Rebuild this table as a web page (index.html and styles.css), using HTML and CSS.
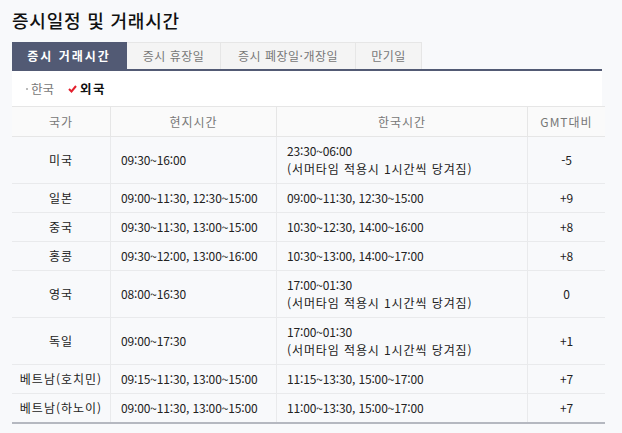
FILE: index.html
```html
<!DOCTYPE html>
<html lang="ko">
<head>
<meta charset="utf-8">
<link rel="stylesheet" href="styles.css">
</head>
<body>
<div class="page">
  <h1 class="title">증시일정 및 거래시간</h1>
  <ul class="tabs">
    <li class="tab tab-on t1">증시 거래시간</li>
    <li class="tab t2">증시 휴장일</li>
    <li class="tab t3">증시 폐장일·개장일</li>
    <li class="tab t4">만기일</li>
  </ul>
  <div class="panel">
    <div class="filter">
      <span class="opt"><span class="dot"></span>한국</span>
      <span class="opt opt-on"><svg class="check" width="9" height="8" viewBox="0 0 9 8"><path d="M1 4 L3.5 6.5 L8 1" fill="none" stroke="#e3202d" stroke-width="2"/></svg>외국</span>
    </div>
    <table class="grid">
      <thead>
        <tr><th class="c1">국가</th><th class="c2">현지시간</th><th class="c3">한국시간</th><th class="c4">GMT대비</th></tr>
      </thead>
      <tbody>
        <tr><td class="ctr nation">미국</td><td>09:30~16:00</td><td>23:30~06:00<br><span class="note">(서머타임 적용시 1시간씩 당겨짐)</span></td><td class="ctr">-5</td></tr>
        <tr><td class="ctr nation">일본</td><td>09:00~11:30, 12:30~15:00</td><td>09:00~11:30, 12:30~15:00</td><td class="ctr">+9</td></tr>
        <tr><td class="ctr nation">중국</td><td>09:30~11:30, 13:00~15:00</td><td>10:30~12:30, 14:00~16:00</td><td class="ctr">+8</td></tr>
        <tr><td class="ctr nation">홍콩</td><td>09:30~12:00, 13:00~16:00</td><td>10:30~13:00, 14:00~17:00</td><td class="ctr">+8</td></tr>
        <tr><td class="ctr nation">영국</td><td>08:00~16:30</td><td>17:00~01:30<br><span class="note">(서머타임 적용시 1시간씩 당겨짐)</span></td><td class="ctr">0</td></tr>
        <tr><td class="ctr nation">독일</td><td>09:00~17:30</td><td>17:00~01:30<br><span class="note">(서머타임 적용시 1시간씩 당겨짐)</span></td><td class="ctr">+1</td></tr>
        <tr><td class="ctr nation">베트남(호치민)</td><td>09:15~11:30, 13:00~15:00</td><td>11:15~13:30, 15:00~17:00</td><td class="ctr">+7</td></tr>
        <tr><td class="ctr nation">베트남(하노이)</td><td>09:00~11:30, 13:00~15:00</td><td>11:00~13:30, 15:00~17:00</td><td class="ctr">+7</td></tr>
      </tbody>
    </table>
  </div>
</div>
</body>
</html>
```

FILE: styles.css
```css
html, body {
  margin: 0;
  padding: 0;
  background: #f8f9fb;
}
body {
  font-family: "Noto Sans CJK KR", "Noto Sans", sans-serif;
  font-size: 12px;
  color: #222;
}
.page {
  width: 590px;
  padding: 8px 0 0 12px;
}
.title {
  margin: 0 0 10px 0;
  font-size: 18px;
  font-weight: 500;
  line-height: 24px;
  color: #111;
  letter-spacing: 0.8px;
}
.tabs {
  display: flex;
  margin: 0;
  padding: 0;
  list-style: none;
  border-bottom: 2px solid #525a74;
}
.tab {
  box-sizing: border-box;
  height: 27px;
  line-height: 26px;
  text-align: center;
  background: #f4f4f4;
  color: #777;
  border-top: 1px solid #e6e6e6;
  border-right: 1px solid #e6e6e6;
  letter-spacing: 0.5px;
}
.tab-on {
  background: #525a74;
  color: #fff;
  font-weight: 700;
  border-color: #525a74;
  letter-spacing: 2px;
}
.t1 { width: 115px; }
.t2 { width: 94px; }
.t3 { width: 135px; }
.t4 { width: 66px; }
.panel {
  background: #fff;
}
.filter {
  height: 35px;
  display: flex;
  align-items: center;
  gap: 14px;
  padding-left: 14px;
  font-size: 12.5px;
}
.opt {
  display: flex;
  align-items: center;
  color: #777;
}
.dot {
  width: 2px;
  height: 2px;
  background: #bbb;
  margin-right: 3px;
}
.opt-on {
  color: #111;
  font-weight: 700;
  letter-spacing: 1.5px;
}
.check {
  margin-right: 3px;
}
.grid {
  width: 590px;
  border-collapse: collapse;
  table-layout: fixed;
  background: #f8f9fb;
  border-bottom: 2px solid #b5b8c0;
}
.grid th {
  height: 29px;
  padding: 0;
  font-weight: 400;
  color: #777;
  background: #fafafa;
  border-top: 1px solid #e6e6e6;
  border-bottom: 1px solid #e6e6e6;
  border-left: 1px solid #e6e6e6;
  text-align: center;
  letter-spacing: 1px;
}
.grid th:first-child,
.grid td:first-child {
  border-left: none;
}
.c1 { width: 98px; }
.c2 { width: 165px; }
.c3 { width: 250px; }
.c4 { width: 77px; }
.grid td {
  padding: 5px 0 5px 10px;
  line-height: 18px;
  border-bottom: 1px solid #e9eaec;
  border-left: 1px solid #e9eaec;
  color: #222;
  letter-spacing: -0.15px;
  white-space: nowrap;
}
.grid td.ctr {
  text-align: center;
  padding-left: 0;
}
.grid td.nation {
  letter-spacing: 1px;
}
.note {
  letter-spacing: 0.9px;
}
.grid tbody tr:last-child td {
  border-bottom: none;
}
```
